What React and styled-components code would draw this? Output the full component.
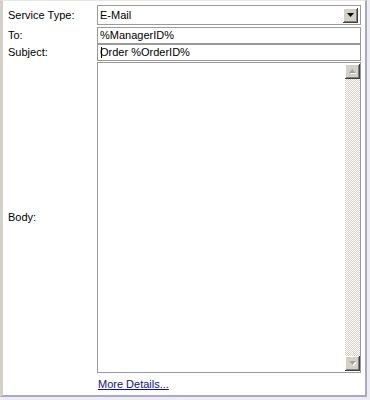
import React from "react";
import styled, { createGlobalStyle } from "styled-components";

const Global = createGlobalStyle`
  html, body { margin: 0; padding: 0; background: #ececf2; }
  * { box-sizing: border-box; }
`;

const Window = styled.div`
  width: 370px;
  height: 400px;
  background: #ececf2;
  font-family: "Liberation Sans", Arial, sans-serif;
  font-size: 11px;
  color: #000;
`;

const Panel = styled.div`
  width: 367px;
  height: 397px;
  background: #fff;
  border-top: 1px solid #e6e6e6;
  border-left: 3px solid #d4d0c8;
  border-right: 2px solid #a9a9c6;
  border-bottom: 2px solid #a9a9c6;
  padding: 4px 4px 0 5px;
  display: flex;
  flex-direction: column;
`;

const Row = styled.div`
  display: grid;
  grid-template-columns: 89px 1fr;
  align-items: center;
  height: ${(p) => p.$h}px;
  margin-top: ${(p) => p.$top || 0}px;
`;

const Label = styled.div`
  line-height: 13px;
  white-space: nowrap;
`;

const Field = styled.div`
  position: relative;
  height: 100%;
  border: 1px solid #9a9a9a;
  background: #fff;
  display: flex;
  align-items: center;
  padding-left: 2px;
  line-height: 13px;
  white-space: nowrap;
  overflow: hidden;
`;

const SelectBox = styled(Field)`
  padding-right: 2px;
  justify-content: space-between;
`;

const Btn3D = styled.div`
  width: 15px;
  height: ${(p) => p.$h || 15}px;
  background: #d4d0c8;
  box-shadow: inset -1px -1px #404040, inset 1px 1px #ffffff,
    inset -2px -2px #808080, inset 2px 2px #d4d0c8;
  display: flex;
  align-items: center;
  justify-content: center;
  flex: none;
`;

const Caret = styled.span`
  position: absolute;
  left: 3px;
  top: 2px;
  bottom: 2px;
  width: 1px;
  background: #000;
`;

const BodyBox = styled.div`
  height: 100%;
  border: 1px solid #9a9a9a;
  background: #fff;
  display: flex;
  justify-content: flex-end;
  padding: 1px 0;
`;

const ScrollBar = styled.div`
  width: 15px;
  display: flex;
  flex-direction: column;
`;

const Track = styled.div`
  flex: 1;
  background: repeating-conic-gradient(#d4d0c8 0% 25%, #ffffff 0% 50%) 0 0 / 2px 2px;
`;

const LinkRow = styled.div`
  margin-top: 5px;
  padding-left: 90px;
  line-height: 13px;
`;

const MoreLink = styled.a`
  color: #10108a;
  text-decoration: underline;
  cursor: pointer;
`;

const Arrow = ({ dir, color }) => (
  <svg width="7" height="5" viewBox="0 0 7 5">
    {dir === "down" ? (
      <>
        {color !== "#000" && <polygon points="1,1 8,1 4.5,5" fill="#fff" />}
        <polygon points="0,0 7,0 3.5,4" fill={color} />
      </>
    ) : (
      <>
        <polygon points="1,5 8,5 4.5,1" fill="#fff" />
        <polygon points="0,4 7,4 3.5,0" fill={color} />
      </>
    )}
  </svg>
);

export default function App() {
  return (
    <>
      <Global />
      <Window>
        <Panel>
          <Row $h={20}>
            <Label>Service Type:</Label>
            <SelectBox>
              <span>E-Mail</span>
              <Btn3D $h={15}>
                <Arrow dir="down" color="#000" />
              </Btn3D>
            </SelectBox>
          </Row>
          <Row $h={17} $top={2}>
            <Label>To:</Label>
            <Field>%ManagerID%</Field>
          </Row>
          <Row $h={17}>
            <Label>Subject:</Label>
            <Field>
              Order %OrderID%
              <Caret />
            </Field>
          </Row>
          <Row $h={311} $top={1}>
            <Label>Body:</Label>
            <BodyBox>
              <ScrollBar>
                <Btn3D $h={15}>
                  <Arrow dir="up" color="#a0a0a0" />
                </Btn3D>
                <Track />
                <Btn3D $h={15}>
                  <Arrow dir="down" color="#a0a0a0" />
                </Btn3D>
              </ScrollBar>
            </BodyBox>
          </Row>
          <LinkRow>
            <MoreLink>More Details...</MoreLink>
          </LinkRow>
        </Panel>
      </Window>
    </>
  );
}
